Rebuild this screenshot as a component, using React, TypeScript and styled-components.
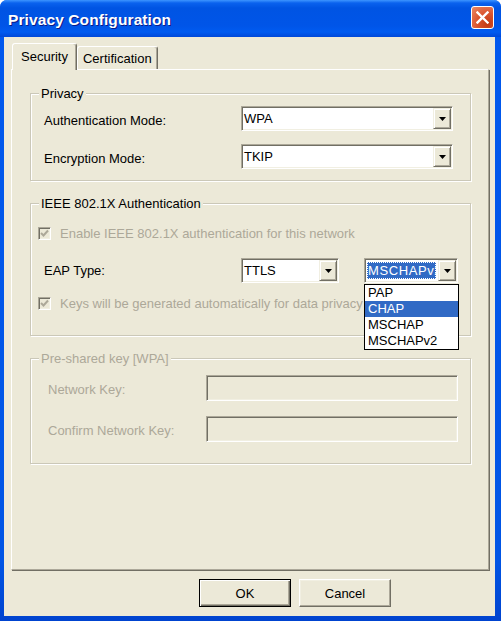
import React from "react";
import styled, { createGlobalStyle, css } from "styled-components";

const GlobalStyle = createGlobalStyle`
  html, body { margin: 0; padding: 0; background: #ffffff; }
  body { font-family: "Liberation Sans", Arial, sans-serif; font-size: 13px; color: #000; }
  * { box-sizing: border-box; }
`;

const BEIGE = "#ECE9D8";
const DISABLED = "#ACA899";
const HILITE = "#316AC5";

const Window = styled.div`
  width: 501px;
  height: 621px;
  display: flex;
  flex-direction: column;
  background: linear-gradient(to bottom, #0058EE 0%, #0055E5 90%, #0043CF 100%);
  border-radius: 7px 7px 0 0;
  overflow: hidden;
`;

const TitleBar = styled.div`
  height: 37px;
  flex: none;
  display: flex;
  align-items: center;
  justify-content: space-between;
  padding: 2px 8px 0 8px;
  background: linear-gradient(
    to bottom,
    #3D95FF 0px,
    #0A62EE 3px,
    #0054E3 8px,
    #0055E8 26px,
    #005BF0 32px,
    #0048D8 37px
  );
`;

const Title = styled.div`
  color: #fff;
  font-family: "Liberation Sans", Arial, sans-serif;
  font-weight: bold;
  font-size: 15.5px;
  letter-spacing: 0.1px;
  text-shadow: 1px 1px 0 #0A1B8A;
`;

const CloseButton = styled.div`
  width: 23px;
  height: 23px;
  align-self: flex-start;
  margin-top: 4px;
  margin-right: -1px;
  border: 1px solid #fff;
  border-radius: 3px;
  background: radial-gradient(circle at 75% 80%, #C23A14 0%, #D9532E 45%, #EC8A66 100%);
  display: flex;
  align-items: center;
  justify-content: center;
`;

const Body = styled.div`
  flex: 1;
  margin: 0 6px 5px 4px;
  background: ${BEIGE};
  padding: 6px 0 0 7px;
  display: flex;
  flex-direction: column;
`;

const TabStrip = styled.div`
  height: 26px;
  display: flex;
  align-items: flex-end;
  padding-left: 1px;
  position: relative;
  z-index: 2;
`;

const Tab = styled.div<{ $active?: boolean }>`
  background: ${BEIGE};
  border: 1px solid;
  border-bottom: none;
  border-color: #fff #716F64 transparent #fff;
  border-radius: 3px 3px 0 0;
  box-shadow: inset -1px 0 0 #ACA899;
  display: flex;
  align-items: center;
  white-space: nowrap;
  ${(p) =>
    p.$active
      ? css`
          height: 27px;
          margin-bottom: -1px;
          padding: 0 8px 1px 8px;
        `
      : css`
          height: 23px;
          padding: 1px 5px 0 5px;
        `}
`;

const Panel = styled.div`
  width: 478px;
  height: 501px;
  border: 1px solid;
  border-color: #fff #ACA899 #ACA899 #fff;
  box-shadow: 1px 1px 0 #716F64;
  padding: 23px 0 0 18px;
  display: flex;
  flex-direction: column;
  gap: 22px;
`;

const Group = styled.div<{ $h: number }>`
  position: relative;
  width: 441px;
  height: ${(p) => p.$h}px;
  border: 1px solid #CBC8B8;
  box-shadow: inset 1px 1px 0 #fff, 1px 1px 0 #fff;
`;

const Caption = styled.span<{ $disabled?: boolean }>`
  position: absolute;
  top: -8px;
  left: 8px;
  padding: 0 2px;
  line-height: 15px;
  background: ${BEIGE};
  color: ${(p) => (p.$disabled ? DISABLED : "#000")};
`;

const FormGrid = styled.div<{ $cols: string; $gap: number; $pad: string }>`
  display: grid;
  grid-template-columns: ${(p) => p.$cols};
  row-gap: ${(p) => p.$gap}px;
  padding: ${(p) => p.$pad};
  align-items: center;
`;

const Label = styled.span<{ $disabled?: boolean; $shift?: number }>`
  line-height: 15px;
  padding-top: ${(p) => p.$shift ?? 2}px;
  color: ${(p) => (p.$disabled ? DISABLED : "#000")};
  white-space: nowrap;
`;

const Stack = styled.div`
  display: flex;
  flex-direction: column;
  padding-top: 22px;
`;

const CheckRow = styled.div<{ $mt?: number }>`
  display: flex;
  align-items: center;
  height: 15px;
  padding-left: 7px;
  gap: 9px;
  margin-top: ${(p) => p.$mt ?? 0}px;
  color: ${DISABLED};
  white-space: nowrap;
`;

const CheckBox = styled.span`
  width: 13px;
  height: 13px;
  flex: none;
  border: 1px solid;
  border-color: #ACA899 #fff #fff #ACA899;
  box-shadow: inset 1px 1px 0 #716F64, inset -1px -1px 0 #F1EFE2;
  background: ${BEIGE};
  display: flex;
  align-items: center;
  justify-content: center;
`;

const EapRow = styled.div`
  display: flex;
  align-items: center;
  height: 25px;
  margin-top: 17px;
  padding-left: 13px;
`;

const EapLabel = styled(Label)`
  width: 197px;
`;

const SelectBox = styled.div<{ $w: number; $ml?: number }>`
  position: relative;
  width: ${(p) => p.$w}px;
  height: 25px;
  margin-left: ${(p) => p.$ml ?? 0}px;
  background: #fff;
  border: 1px solid;
  border-color: #ACA899 #fff #fff #ACA899;
  box-shadow: inset 1px 1px 0 #716F64, inset -1px -1px 0 #F1EFE2;
  padding: 1px;
  display: flex;
`;

const ValueText = styled.div`
  flex: 1;
  min-width: 0;
  padding: 0 0 0 1px;
  display: flex;
  align-items: center;
  line-height: 15px;
  white-space: nowrap;
  overflow: hidden;
`;

const HighlightText = styled.div`
  flex: 1;
  min-width: 0;
  margin: 2px 2px 2px 1px;
  background: ${HILITE};
  color: #fff;
  outline: 1px dotted #fff;
  outline-offset: -1px;
  line-height: 17px;
  padding-left: 1px;
  overflow: hidden;
  white-space: nowrap;
  letter-spacing: 0.6px;
`;

const DropButton = styled.div`
  width: 18px;
  flex: none;
  background: ${BEIGE};
  border: 1px solid;
  border-color: #F1EFE2 #716F64 #716F64 #F1EFE2;
  box-shadow: inset 1px 1px 0 #fff, inset -1px -1px 0 #ACA899;
  display: flex;
  align-items: center;
  justify-content: center;
`;

const DropList = styled.div`
  position: absolute;
  top: 25px;
  left: -1px;
  width: 95px;
  background: #fff;
  border: 1px solid #000;
  z-index: 5;
`;

const DropItem = styled.div<{ $selected?: boolean }>`
  height: 16px;
  line-height: 16px;
  padding-left: 3px;
  background: ${(p) => (p.$selected ? HILITE : "#fff")};
  color: ${(p) => (p.$selected ? "#fff" : "#000")};
`;

const TextInput = styled.div`
  width: 252px;
  height: 26px;
  border: 1px solid;
  border-color: #ACA899 #fff #fff #ACA899;
  box-shadow: inset 1px 1px 0 #716F64, inset -1px -1px 0 #F1EFE2;
  background: ${BEIGE};
`;

const ButtonRow = styled.div`
  display: flex;
  gap: 8px;
  margin-top: 9px;
  padding-left: 188px;
`;

const Button = styled.button<{ $default?: boolean }>`
  width: 92px;
  height: 28px;
  padding: 0;
  font-family: "Liberation Sans", Arial, sans-serif;
  font-size: 13px;
  color: #000;
  background: ${BEIGE};
  border: 1px solid;
  border-color: #fff #716F64 #716F64 #fff;
  box-shadow: inset -1px -1px 0 #ACA899, inset 1px 1px 0 #F1EFE2;
  ${(p) =>
    p.$default &&
    css`
      border-color: #000;
      box-shadow: inset 1px 1px 0 #fff, inset -1px -1px 0 #716F64, inset -2px -2px 0 #ACA899;
    `}
`;

const Arrow = () => (
  <svg width="7" height="4" viewBox="0 0 7 4">
    <polygon points="0,0 7,0 3.5,4" fill="#000" />
  </svg>
);

const Check = () => (
  <svg width="9" height="9" viewBox="0 0 9 9">
    <polyline points="1,4 3.5,6.5 8,1.5" fill="none" stroke={DISABLED} strokeWidth="2" />
  </svg>
);

const Select = ({
  value,
  width,
  ml,
  children,
}: {
  value: string;
  width: number;
  ml?: number;
  children?: React.ReactNode;
}) => (
  <SelectBox $w={width} $ml={ml}>
    <ValueText>{value}</ValueText>
    <DropButton>
      <Arrow />
    </DropButton>
    {children}
  </SelectBox>
);

export default function App() {
  return (
    <>
      <GlobalStyle />
      <Window>
        <TitleBar>
          <Title>Privacy Configuration</Title>
          <CloseButton>
            <svg width="13" height="13" viewBox="0 0 13 13">
              <path d="M1.5 1.5 L11.5 11.5 M11.5 1.5 L1.5 11.5" stroke="#fff" strokeWidth="2.4" strokeLinecap="square" />
            </svg>
          </CloseButton>
        </TitleBar>
        <Body>
          <TabStrip>
            <Tab $active>Security</Tab>
            <Tab>Certification</Tab>
          </TabStrip>
          <Panel>
            <Group $h={88}>
              <Caption>Privacy</Caption>
              <FormGrid $cols="197px 212px" $gap={13} $pad="12px 0 0 13px">
                <Label $shift={3}>Authentication Mode:</Label>
                <Select value="WPA" width={212} />
                <Label $shift={3}>Encryption Mode:</Label>
                <Select value="TKIP" width={212} />
              </FormGrid>
            </Group>

            <Group $h={133}>
              <Caption>IEEE 802.1X Authentication</Caption>
              <Stack>
                <CheckRow>
                  <CheckBox>
                    <Check />
                  </CheckBox>
                  Enable IEEE 802.1X authentication for this network
                </CheckRow>
                <EapRow>
                  <EapLabel $shift={0}>EAP Type:</EapLabel>
                  <Select value="TTLS" width={98} />
                  <SelectBox $w={94} $ml={25}>
                    <HighlightText>MSCHAPv2</HighlightText>
                    <DropButton>
                      <Arrow />
                    </DropButton>
                    <DropList>
                      <DropItem>PAP</DropItem>
                      <DropItem $selected>CHAP</DropItem>
                      <DropItem>MSCHAP</DropItem>
                      <DropItem>MSCHAPv2</DropItem>
                    </DropList>
                  </SelectBox>
                </EapRow>
                <CheckRow $mt={13}>
                  <CheckBox>
                    <Check />
                  </CheckBox>
                  Keys will be generated automatically for data privacy
                </CheckRow>
              </Stack>
            </Group>

            <Group $h={106}>
              <Caption $disabled>Pre-shared key [WPA]</Caption>
              <FormGrid $cols="158px 252px" $gap={15} $pad="16px 0 0 17px">
                <Label $disabled>Network Key:</Label>
                <TextInput />
                <Label $disabled>Confirm Network Key:</Label>
                <TextInput />
              </FormGrid>
            </Group>
          </Panel>
          <ButtonRow>
            <Button $default>OK</Button>
            <Button>Cancel</Button>
          </ButtonRow>
        </Body>
      </Window>
    </>
  );
}
